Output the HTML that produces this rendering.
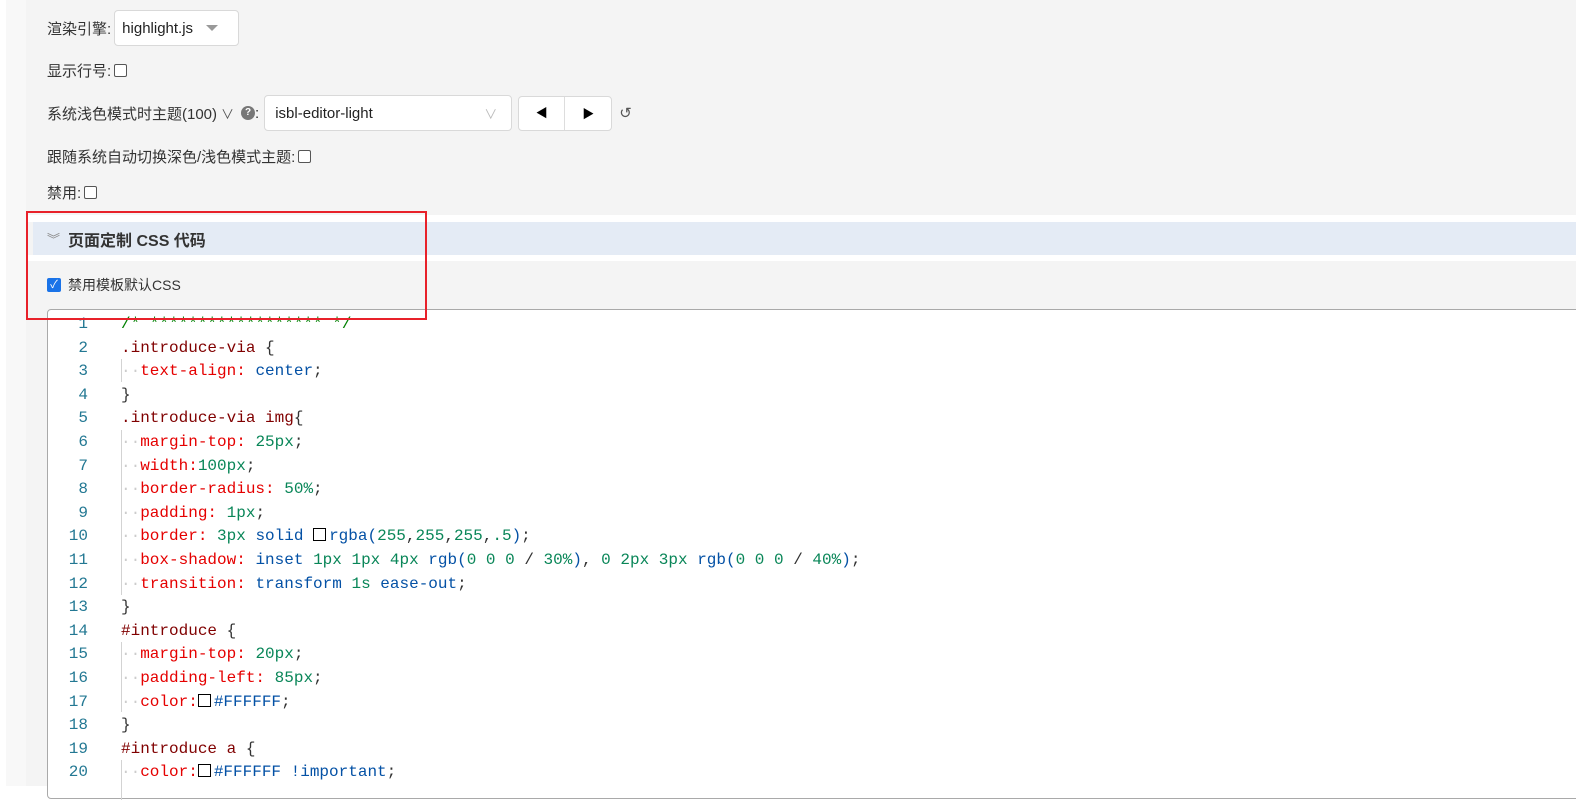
<!DOCTYPE html>
<html><head><meta charset="utf-8">
<style>
*{box-sizing:border-box;margin:0;padding:0}
body{width:1576px;height:786px;overflow:hidden;background:#fff;font-family:"Liberation Sans","Noto Sans CJK SC",sans-serif;font-size:15px;color:#333;position:relative}
.strip{position:absolute;left:6px;top:0;width:20px;height:786px;background:#f8f8f8}
.main{position:absolute;left:26px;top:0;right:0;height:786px;background:#f4f4f4}
.row{position:absolute;left:21px;display:flex;align-items:center;white-space:nowrap}
.cb{display:inline-block;width:13px;height:13px;border:1px solid #555;border-radius:2px;background:#fff;margin-left:3px}
.sel{background:#fff;border:1px solid #d9d9d9;border-radius:4px;display:flex;align-items:center;font-size:15px;color:#222}
.gap{position:absolute;left:0;right:0;top:215px;height:7px;background:#fff}
.hdr{position:absolute;left:7px;right:0;top:222px;height:33px;background:#e4ebf5;font-weight:bold;font-size:16px;color:#333;display:flex;align-items:center;padding-left:14px}
.gap2{position:absolute;left:0;right:0;top:255px;height:6px;background:#fff}
.red{position:absolute;left:26px;top:211px;width:401px;height:109px;border:2px solid #e8212a;z-index:5}
.ed{position:absolute;left:47px;top:309px;width:1540px;height:490px;background:#fff;border:1px solid #a9a9a9;border-radius:4px;font-family:"Liberation Mono",monospace;font-size:16px}
.ln{position:absolute;left:0;width:40px;text-align:right;color:#237893}
.cd{position:absolute;left:73px;white-space:pre;color:#333}
.s{color:#800000}.p{color:#e50000}.v{color:#0451a5}.n{color:#098658}.c{color:#008000}
.d{color:#ccc}
.g{position:absolute;left:73px;width:1px;background:#d3d3d3}
.box{display:inline-block;width:13px;height:13px;border:1px solid #000;vertical-align:-1px;margin-right:3px}
</style></head><body>
<div class="strip"></div>
<div class="main">
 <div class="row" style="top:10px">渲染引擎:<div class="sel" style="margin-left:3px;width:125px;height:36px;padding-left:7px">highlight.js<span style="margin-left:13px;width:0;height:0;border-left:6px solid transparent;border-right:6px solid transparent;border-top:6px solid #999"></span></div></div>
 <div class="row" style="top:60px">显示行号:<span class="cb"></span></div>
 <div class="row" style="top:95px">系统浅色模式时主题(100)<span style="font-size:13px;margin-left:4px;color:#555">∨</span><span style="display:inline-block;width:14px;height:14px;border-radius:50%;background:#777;color:#fff;font-size:10px;text-align:center;line-height:14px;margin-left:7px;font-weight:bold">?</span>:
  <div class="sel" style="margin-left:5px;width:248px;height:36px;padding-left:10px">isbl-editor-light<span style="margin-left:auto;margin-right:14px;color:#bbb;font-size:13px">∨</span></div>
  <div class="sel" style="margin-left:6px;width:94px;height:35px"><span style="width:46px;text-align:center;border-right:1px solid #ddd;line-height:33px;font-size:12px;color:#000">◀</span><span style="width:46px;text-align:center;font-size:12px;color:#000">▶</span></div>
  <span style="margin-left:7px;font-size:15px;color:#555">↺</span></div>
 <div class="row" style="top:146px">跟随系统自动切换深色/浅色模式主题:<span class="cb"></span></div>
 <div class="row" style="top:182px">禁用:<span class="cb"></span></div>
 <div class="gap"></div>
 <div class="hdr"><span style="color:#888;font-weight:normal;margin-right:8px;font-size:13px">︾</span>页面定制 CSS 代码</div>
 <div class="gap2"></div>
 <div class="row" style="top:275px;font-size:14px"><span style="display:inline-block;width:14px;height:14px;background:#1a73e8;border-radius:2px;color:#fff;font-size:11px;text-align:center;line-height:14px;margin-right:7px">✓</span>禁用模板默认CSS</div>
</div>
<div class="red"></div>
<div class="ed">
<div class="g" style="top:49px;height:23px"></div>
<div class="g" style="top:120px;height:165px"></div>
<div class="g" style="top:332px;height:70px"></div>
<div class="g" style="top:450px;height:40px"></div>
<div style="position:absolute;top:3px;left:0;line-height:23.6px">
<div class="ln" style="top:0">1</div><div class="ln" style="top:23.6px">2</div><div class="ln" style="top:47.2px">3</div><div class="ln" style="top:70.8px">4</div><div class="ln" style="top:94.4px">5</div><div class="ln" style="top:118px">6</div><div class="ln" style="top:141.6px">7</div><div class="ln" style="top:165.2px">8</div><div class="ln" style="top:188.8px">9</div><div class="ln" style="top:212.4px">10</div><div class="ln" style="top:236px">11</div><div class="ln" style="top:259.6px">12</div><div class="ln" style="top:283.2px">13</div><div class="ln" style="top:306.8px">14</div><div class="ln" style="top:330.4px">15</div><div class="ln" style="top:354px">16</div><div class="ln" style="top:377.6px">17</div><div class="ln" style="top:401.2px">18</div><div class="ln" style="top:424.8px">19</div><div class="ln" style="top:448.4px">20</div>
<div class="cd" style="top:0"><span class="c">/* ****************** */</span></div>
<div class="cd" style="top:23.6px"><span class="s">.introduce-via</span> {</div>
<div class="cd" style="top:47.2px"><span class="d">··</span><span class="p">text-align:</span> <span class="v">center</span>;</div>
<div class="cd" style="top:70.8px">}</div>
<div class="cd" style="top:94.4px"><span class="s">.introduce-via img</span>{</div>
<div class="cd" style="top:118px"><span class="d">··</span><span class="p">margin-top:</span> <span class="n">25px</span>;</div>
<div class="cd" style="top:141.6px"><span class="d">··</span><span class="p">width:</span><span class="n">100px</span>;</div>
<div class="cd" style="top:165.2px"><span class="d">··</span><span class="p">border-radius:</span> <span class="n">50%</span>;</div>
<div class="cd" style="top:188.8px"><span class="d">··</span><span class="p">padding:</span> <span class="n">1px</span>;</div>
<div class="cd" style="top:212.4px"><span class="d">··</span><span class="p">border:</span> <span class="n">3px</span> <span class="v">solid</span> <span class="box"></span><span class="v">rgba(</span><span class="n">255</span>,<span class="n">255</span>,<span class="n">255</span>,<span class="n">.5</span><span class="v">)</span>;</div>
<div class="cd" style="top:236px"><span class="d">··</span><span class="p">box-shadow:</span> <span class="v">inset</span> <span class="n">1px 1px 4px</span> <span class="v">rgb(</span><span class="n">0 0 0</span> / <span class="n">30%</span><span class="v">)</span>, <span class="n">0 2px 3px</span> <span class="v">rgb(</span><span class="n">0 0 0</span> / <span class="n">40%</span><span class="v">)</span>;</div>
<div class="cd" style="top:259.6px"><span class="d">··</span><span class="p">transition:</span> <span class="v">transform</span> <span class="n">1s</span> <span class="v">ease-out</span>;</div>
<div class="cd" style="top:283.2px">}</div>
<div class="cd" style="top:306.8px"><span class="s">#introduce</span> {</div>
<div class="cd" style="top:330.4px"><span class="d">··</span><span class="p">margin-top:</span> <span class="n">20px</span>;</div>
<div class="cd" style="top:354px"><span class="d">··</span><span class="p">padding-left:</span> <span class="n">85px</span>;</div>
<div class="cd" style="top:377.6px"><span class="d">··</span><span class="p">color:</span><span class="box"></span><span class="v">#FFFFFF</span>;</div>
<div class="cd" style="top:401.2px">}</div>
<div class="cd" style="top:424.8px"><span class="s">#introduce a</span> {</div>
<div class="cd" style="top:448.4px"><span class="d">··</span><span class="p">color:</span><span class="box"></span><span class="v">#FFFFFF !important</span>;</div>
</div>
</div>
</body></html>
